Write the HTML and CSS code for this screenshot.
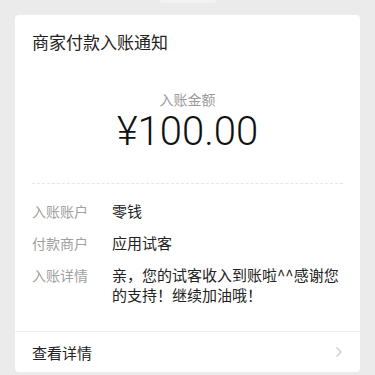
FILE: index.html
```html
<!DOCTYPE html>
<html lang="zh-CN">
<head>
    <meta charset="UTF-8">
    <title>商家付款入账通知</title>
    <link rel="stylesheet" href="styles.css">
</head>
<body>
    <!-- timestamp bubble, cut off at the top -->
    <div class="time-tip"></div>

    <div class="card">
        <div class="card-title">商家付款入账通知</div>

        <div class="amount-box">
            <div class="amount-label">入账金额</div>
            <div class="amount">¥100.00</div>
        </div>

        <div class="info">
            <div class="info-row">
                <span class="info-key">入账账户</span>
                <span class="info-val">零钱</span>
            </div>
            <div class="info-row">
                <span class="info-key">付款商户</span>
                <span class="info-val">应用试客</span>
            </div>
            <div class="info-row">
                <span class="info-key">入账详情</span>
                <span class="info-val">亲，您的试客收入到账啦^^感谢您的支持！继续加油哦！</span>
            </div>
        </div>

        <div class="card-footer">
            <span>查看详情</span>
            <svg class="arrow" width="8" height="12" viewBox="0 0 8 12">
                <path d="M1.5 1.5 L6 6 L1.5 10.5" fill="none" stroke="#c8c8c8" stroke-width="1.2"/>
            </svg>
        </div>
    </div>
</body>
</html>
```

FILE: styles.css
```css
/* General styles */
body {
    margin: 0;
    padding: 0;
    background-color: #ebebeb;
    font-family: "Noto Sans CJK SC", "Noto Sans", sans-serif;
    color: #333;
}

.time-tip {
    width: 56px;
    height: 3px;
    margin: 0 auto;
    background-color: #f2f2f2;
    border-radius: 0 0 4px 4px;
}

/* Message card */
.card {
    background-color: #fff;
    border-radius: 4px;
    margin: 12px 15px 0;
}

.card-title {
    padding: 16px 17px 0;
    font-size: 17px;
    line-height: 22px;
    color: #222;
}

.amount-box {
    text-align: center;
    margin: 37px 17px 0;
    padding-bottom: 27px;
    border-bottom: 1px dashed #e6e6e6;
}

.amount-label {
    font-size: 14px;
    line-height: 18px;
    color: #9a9a9a;
}

.amount {
    font-family: Roboto, "Liberation Sans", sans-serif;
    font-weight: 300;
    font-size: 40px;
    line-height: 48px;
    color: #111;
}

.info {
    padding: 17px 20px 26px 17px;
}

.info-row {
    display: flex;
    font-size: 15px;
    line-height: 20px;
    margin-bottom: 12px;
}

.info-row:last-child {
    margin-bottom: 0;
}

.info-key {
    width: 80px;
    flex-shrink: 0;
    font-size: 14px;
    color: #a0a0a0;
}

.info-val {
    color: #222;
}

.card-footer {
    display: flex;
    align-items: center;
    justify-content: space-between;
    height: 40px;
    padding: 0 17px;
    border-top: 1px solid #efefef;
    font-size: 15px;
    color: #222;
}
```
